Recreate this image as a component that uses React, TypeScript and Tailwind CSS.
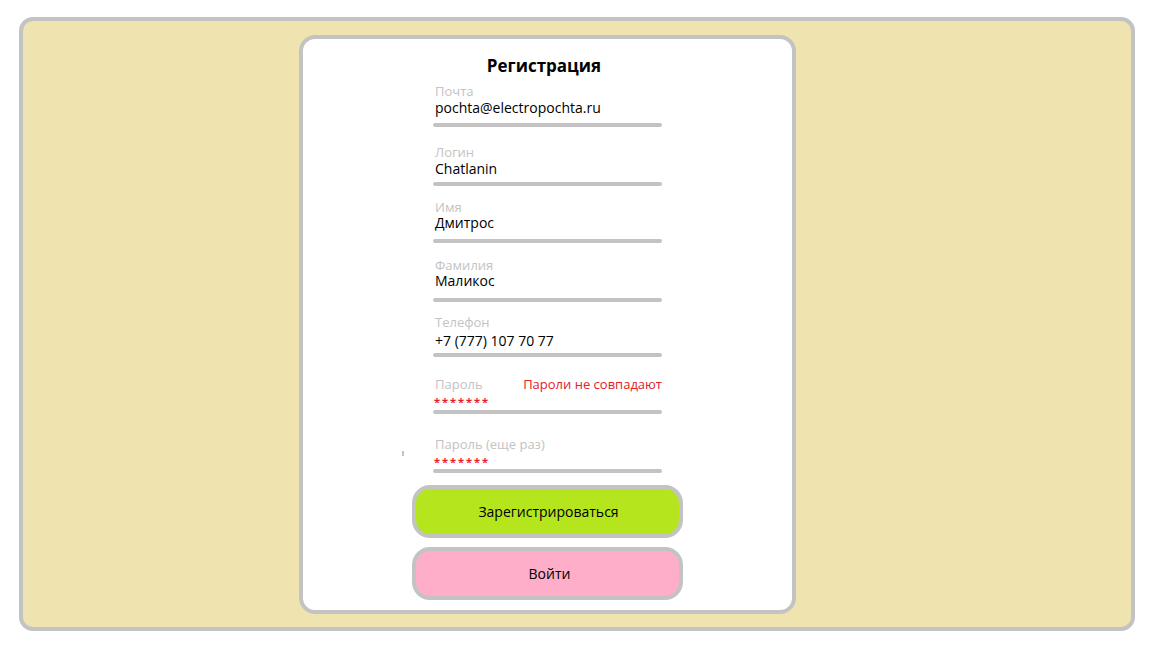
import React from "react";

type FieldProps = {
  label: string;
  value: string;
  labelMt: number;
  valueMt: number;
  barMt: number;
  password?: boolean;
  error?: string;
  mark?: boolean;
};

const mtClass: Record<number, string> = {
  [-2]: "-mt-[2px]",
  [-1]: "-mt-[1px]",
  0: "mt-0",
  1: "mt-[1px]",
  2: "mt-[2px]",
  3: "mt-[3px]",
  4: "mt-[4px]",
  5: "mt-[5px]",
  6: "mt-[6px]",
  7: "mt-[7px]",
  8: "mt-[8px]",
  13: "mt-[13px]",
  14: "mt-[14px]",
  15: "mt-[15px]",
  18: "mt-[18px]",
  20: "mt-[20px]",
  23: "mt-[23px]",
};

function Field({ label, value, labelMt, valueMt, barMt, password, error, mark }: FieldProps) {
  return (
    <div className={`relative flex w-[229px] flex-col ${mtClass[labelMt]}`}>
      {mark && <span className="absolute left-[-31px] top-[14px] h-[5px] w-[2px] bg-[#c3c3c3]" />}
      <div className="flex h-[14px] items-center justify-between pl-[2px] text-[13px] leading-[14px] text-[#c3c3c3]">
        <span>{label}</span>
        {error && <span className="text-[#e3212b]">{error}</span>}
      </div>
      {password ? (
        <div className={`${mtClass[valueMt]} h-[18px] pl-[1px] text-[11px] font-bold leading-[18px] tracking-[2px] text-[#ed1c24]`}>
          {value}
        </div>
      ) : (
        <div className={`${mtClass[valueMt]} h-[18px] pl-[2px] text-[14px] leading-[18px] text-black`}>{value}</div>
      )}
      <div className={`${mtClass[barMt]} h-[4px] w-full rounded-full bg-[#c3c3c3]`} />
    </div>
  );
}

export default function App() {
  return (
    <div
      className="h-[648px] w-[1152px] bg-white pl-[19px] pt-[17px]"
      style={{ fontFamily: '"Open Sans", "Noto Sans", sans-serif' }}
    >
      <div className="flex h-[614px] w-[1116px] rounded-[14px] border-4 border-[#c3c3c3] bg-[#efe4b0] pl-[276px] pt-[14px]">
        <div className="flex h-[579px] w-[497px] flex-col items-center rounded-[16px] border-4 border-[#c3c3c3] bg-white pt-[15px]">
          <h1 className="h-[24px] pr-[7px] text-[17px] font-bold leading-[24px] text-black">Регистрация</h1>
          <Field label="Почта" value="pochta@electropochta.ru" labelMt={6} valueMt={1} barMt={6} />
          <Field label="Логин" value="Chatlanin" labelMt={18} valueMt={1} barMt={4} />
          <Field label="Имя" value="Дмитрос" labelMt={14} valueMt={0} barMt={7} />
          <Field label="Фамилия" value="Маликос" labelMt={15} valueMt={0} barMt={8} />
          <Field label="Телефон" value="+7 (777) 107 70 77" labelMt={13} valueMt={3} barMt={3} />
          <Field
            label="Пароль"
            value="*******"
            labelMt={20}
            valueMt={2}
            barMt={-1}
            password
            error="Пароли не совпадают"
          />
          <Field label="Пароль (еще раз)" value="*******" labelMt={23} valueMt={2} barMt={-2} password mark />
          <button className="mt-[12px] h-[53px] w-[271px] rounded-[18px] border-4 border-[#c3c3c3] bg-[#b5e61d] pl-[2px] text-[14px] text-black">
            Зарегистрироваться
          </button>
          <button className="mt-[9px] h-[53px] w-[271px] rounded-[18px] border-4 border-[#c3c3c3] bg-[#ffaec9] pl-[4px] text-[14px] text-black">
            Войти
          </button>
        </div>
      </div>
    </div>
  );
}
